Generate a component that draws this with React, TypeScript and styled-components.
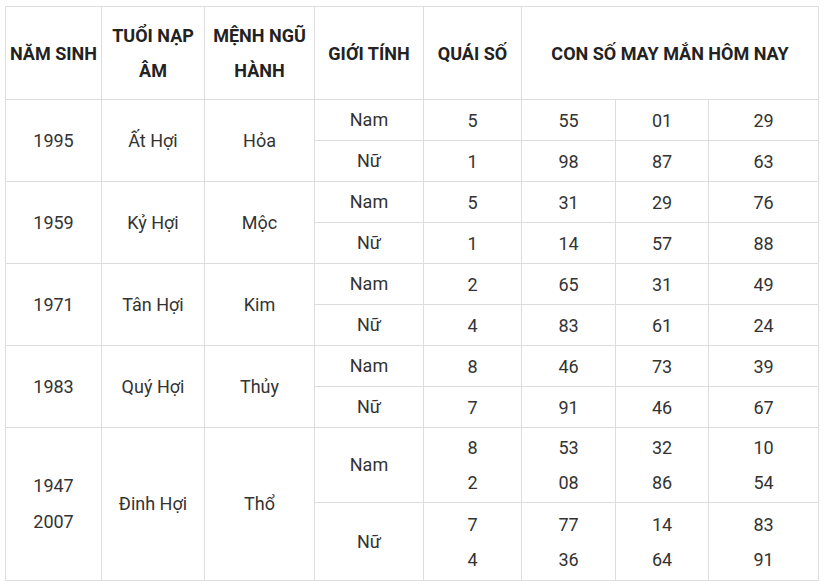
import React from 'react';
import styled, { createGlobalStyle } from 'styled-components';

const GlobalStyle = createGlobalStyle`
  html, body {
    margin: 0;
    padding: 0;
    background: #fff;
  }
  body {
    font-family: Roboto, "Noto Sans", "Liberation Sans", sans-serif;
    color: #333;
  }
`;

const Page = styled.div`
  padding: 6px 0 0 5px;
`;

const Table = styled.table`
  width: 813px;
  border-collapse: collapse;
  table-layout: fixed;
  font-size: 18px;
`;

const HeadCell = styled.th`
  height: 92px;
  padding: 0 4px;
  border: 1px solid #dddddd;
  font-weight: 700;
  color: #222;
  line-height: 35px;
  text-align: center;
  vertical-align: middle;
`;

// $h: fixed row height (tall rows hold two lines), $lh: line height
const Cell = styled.td<{ $h?: number; $lh?: number }>`
  height: ${(p) => (p.$h ? `${p.$h}px` : 'auto')};
  padding: 0 4px;
  border: 1px solid #dddddd;
  line-height: ${(p) => (p.$lh ? `${p.$lh}px` : '24px')};
  text-align: center;
  vertical-align: middle;
  color: #333;
`;

type Gender = { label: string; so: string[]; lucky: string[][] };
type Group = { years: string[]; napAm: string; menh: string; rows: Gender[]; heights: number[] };

const groups: Group[] = [
  {
    years: ['1995'], napAm: 'Ất Hợi', menh: 'Hỏa', heights: [40, 40],
    rows: [
      { label: 'Nam', so: ['5'], lucky: [['55', '01', '29']] },
      { label: 'Nữ', so: ['1'], lucky: [['98', '87', '63']] },
    ],
  },
  {
    years: ['1959'], napAm: 'Kỷ Hợi', menh: 'Mộc', heights: [40, 40],
    rows: [
      { label: 'Nam', so: ['5'], lucky: [['31', '29', '76']] },
      { label: 'Nữ', so: ['1'], lucky: [['14', '57', '88']] },
    ],
  },
  {
    years: ['1971'], napAm: 'Tân Hợi', menh: 'Kim', heights: [40, 40],
    rows: [
      { label: 'Nam', so: ['2'], lucky: [['65', '31', '49']] },
      { label: 'Nữ', so: ['4'], lucky: [['83', '61', '24']] },
    ],
  },
  {
    years: ['1983'], napAm: 'Quý Hợi', menh: 'Thủy', heights: [40, 40],
    rows: [
      { label: 'Nam', so: ['8'], lucky: [['46', '73', '39']] },
      { label: 'Nữ', so: ['7'], lucky: [['91', '46', '67']] },
    ],
  },
  {
    years: ['1947', '2007'], napAm: 'Đinh Hợi', menh: 'Thổ', heights: [74, 77],
    rows: [
      { label: 'Nam', so: ['8', '2'], lucky: [['53', '32', '10'], ['08', '86', '54']] },
      { label: 'Nữ', so: ['7', '4'], lucky: [['77', '14', '83'], ['36', '64', '91']] },
    ],
  },
];

const Lines: React.FC<{ items: string[] }> = ({ items }) => (
  <>
    {items.map((t, i) => (
      <React.Fragment key={i}>
        {i > 0 && <br />}
        {t}
      </React.Fragment>
    ))}
  </>
);

const widths = [96, 103, 110, 109, 98, 94, 93, 110];

export default function App() {
  return (
    <Page>
      <GlobalStyle />
      <Table>
        <colgroup>
          {widths.map((w, i) => (
            <col key={i} width={w} />
          ))}
        </colgroup>
        <thead>
          <tr>
            <HeadCell>NĂM SINH</HeadCell>
            <HeadCell>TUỔI NẠP ÂM</HeadCell>
            <HeadCell>MỆNH NGŨ HÀNH</HeadCell>
            <HeadCell>GIỚI TÍNH</HeadCell>
            <HeadCell>QUÁI SỐ</HeadCell>
            <HeadCell colSpan={3}>CON SỐ MAY MẮN HÔM NAY</HeadCell>
          </tr>
        </thead>
        <tbody>
          {groups.map((g) =>
            g.rows.map((r, ri) => {
              const h = g.heights[ri];
              return (
                <tr key={g.years[0] + r.label}>
                  {ri === 0 && (
                    <>
                      <Cell rowSpan={2} $lh={36}>
                        <Lines items={g.years} />
                      </Cell>
                      <Cell rowSpan={2}>{g.napAm}</Cell>
                      <Cell rowSpan={2}>{g.menh}</Cell>
                    </>
                  )}
                  <Cell $h={h}>{r.label}</Cell>
                  <Cell $h={h} $lh={35}>
                    <Lines items={r.so} />
                  </Cell>
                  {[0, 1, 2].map((c) => (
                    <Cell key={c} $h={h} $lh={35}>
                      <Lines items={r.lucky.map((l) => l[c])} />
                    </Cell>
                  ))}
                </tr>
              );
            })
          )}
        </tbody>
      </Table>
    </Page>
  );
}
